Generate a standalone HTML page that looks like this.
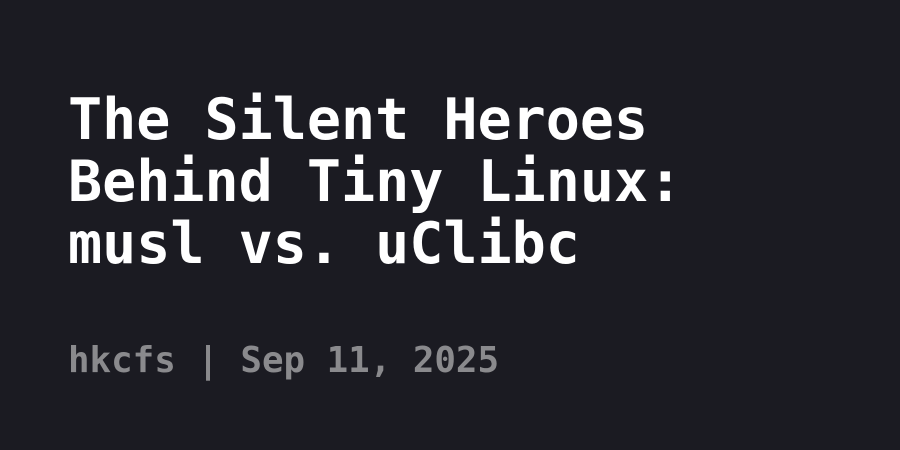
<!DOCTYPE html>
<html><head><meta charset="utf-8"><style>
html,body{margin:0;padding:0;}
body{width:900px;height:450px;background:#1b1b22;position:relative;overflow:hidden;font-family:"DejaVu Sans Mono","Liberation Mono",monospace;font-weight:bold;}
.t{position:absolute;left:68px;top:89px;font-size:56.7px;line-height:62px;color:#ffffff;white-space:pre;}
.s{position:absolute;left:68px;top:343px;font-size:35.8px;line-height:36px;color:#8a8a8d;white-space:pre;}
</style></head><body>
<div class="t">The Silent Heroes
Behind Tiny Linux:
musl vs. uClibc</div>
<div class="s">hkcfs | Sep 11, 2025</div>
</body></html>
